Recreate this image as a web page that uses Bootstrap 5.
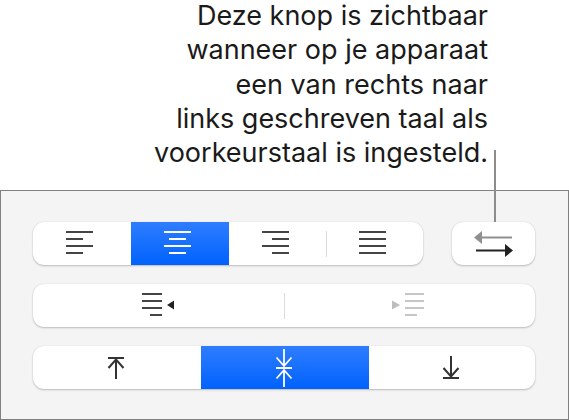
<!DOCTYPE html>
<html>
<head>
    <title>Tekstrichting</title>
    <link rel="stylesheet" href="https://cdn.jsdelivr.net/npm/bootstrap@5.3.0/dist/css/bootstrap.min.css">
    <style>
        html, body { height: 420px; overflow: hidden; background: #fff; }
        .callout-text {
            height: 190px;
            margin-top: -1px;
            margin-bottom: 1px;
            padding-right: 81px;
            font-family: Inter, "Noto Sans", sans-serif;
            font-size: 27px;
            line-height: 34.3px;
            color: #1a1a1a;
        }
        .callout-line { position: absolute; left: 494px; top: 150px; width: 2px; height: 72px; background: #8c8c8c; z-index: 2; }
        .panel-box { height: 230px; background: #f4f4f4; border: 1px solid #808080; padding: 31px 33px 0 32px; }
        .seg-row { height: 43px; }
        .seg-group { background: #fff; border-radius: 11px; box-shadow: 0 0 1px rgba(0,0,0,.18), 0 1px 2px rgba(0,0,0,.22); overflow: hidden; }
        .seg-item { flex: none; padding: 0; border: 0; border-radius: 0; background: transparent; height: 43px; width: 98px; }
        .seg-narrow { width: 97px; }
        .seg-last { width: 96px; }
        .seg-wide { width: 168px; }
        .seg-rest { width: 166px; }
        .seg-half { width: 250.5px; }
        .seg-item:hover, .seg-item:active { background: transparent; }
        .seg-item.seg-on, .seg-item.seg-on:hover { background: linear-gradient(#2f7dff, #0062fd); }
        .seg-sep { flex: none; width: 1px; height: 26px; background: #dcdcdc; }
        .seg-dir { width: 83px; }
        .row-gap { gap: 19px; }
        .icon-shift { padding: 0 5px 3px 0; }
        .icon-shift-sm { padding-right: 3px; }
        .icon-lift { padding-bottom: 4px; }
        svg { display: block; }
    </style>
</head>
<body>
<div class="callout-text text-end">
    Deze knop is zichtbaar<br>
    wanneer op je apparaat<br>
    een van rechts naar<br>
    links geschreven taal als<br>
    voorkeurstaal is ingesteld.
</div>
<div class="callout-line"></div>

<div class="panel-box d-flex flex-column row-gap">
    <div class="d-flex justify-content-between seg-row">
        <div class="seg-group d-flex align-items-center">
            <button class="btn seg-item icon-shift d-flex align-items-center justify-content-center">
                <svg width="27" height="24" viewBox="0 0 27 24" stroke="#444" stroke-width="2"><path d="M0 2h27M0 9h17M0 16h27M0 23h17"/></svg>
            </button>
            <button class="btn seg-item seg-on icon-shift d-flex align-items-center justify-content-center">
                <svg width="27" height="24" viewBox="0 0 27 24" stroke="#fff" stroke-width="2"><path d="M0 2h27M5 9h17M0 16h27M5 23h17"/></svg>
            </button>
            <button class="btn seg-item seg-narrow icon-shift d-flex align-items-center justify-content-center">
                <svg width="27" height="24" viewBox="0 0 27 24" stroke="#444" stroke-width="2"><path d="M0 2h27M10 9h17M0 16h27M10 23h17"/></svg>
            </button>
            <div class="seg-sep"></div>
            <button class="btn seg-item seg-last icon-shift d-flex align-items-center justify-content-center">
                <svg width="27" height="24" viewBox="0 0 27 24" stroke="#444" stroke-width="2"><path d="M0 2h27M0 9h27M0 16h27M0 23h27"/></svg>
            </button>
        </div>
        <div class="seg-group">
            <button class="btn seg-item seg-dir d-flex align-items-center justify-content-center">
                <svg width="39" height="28" viewBox="0 0 39 28"><path d="M7 7.500h31" stroke="#8f8f8f" stroke-width="2"/><path d="M0 7.500 8 1v13z" fill="#8f8f8f"/><path d="M2 20.500h30" stroke="#222" stroke-width="2"/><path d="M39 20.500l-8-6.500v13z" fill="#222"/></svg>
            </button>
        </div>
    </div>

    <div class="seg-group d-flex align-items-center seg-row">
        <button class="btn seg-item seg-half icon-lift d-flex align-items-center justify-content-center">
            <svg width="32" height="24" viewBox="0 0 32 24"><path d="M0 2h20M0 9h20M0 16h20M8 23h12" stroke="#444" stroke-width="2"/><path d="M25 13l7-4.500v9z" fill="#222"/></svg>
        </button>
        <div class="seg-sep"></div>
        <button class="btn seg-item seg-half icon-lift icon-shift-sm d-flex align-items-center justify-content-center">
            <svg width="32" height="24" viewBox="0 0 32 24"><path d="M13 2h19M13 9h19M13 16h19M13 23h12" stroke="#c6c6c6" stroke-width="2"/><path d="M8 13l-8-4.500v9z" fill="#bdbdbd"/></svg>
        </button>
    </div>

    <div class="seg-group d-flex align-items-center seg-row">
        <button class="btn seg-item seg-wide icon-shift-sm d-flex align-items-center justify-content-center">
            <svg width="18" height="22" viewBox="0 0 18 22" fill="none" stroke="#333" stroke-width="2"><path d="M1 1h16M9 2v20M1.500 11 9 2.500 16.500 11"/></svg>
        </button>
        <button class="btn seg-item seg-wide seg-on icon-shift-sm d-flex align-items-center justify-content-center">
            <svg width="18" height="38" viewBox="0 0 18 38" fill="none" stroke="#fff" stroke-width="1.800"><path d="M1 19h16M9 0v17M9 21v17M1.500 8.500 9 17l7.500-8.500M1.500 29.500 9 21l7.500 8.500"/></svg>
        </button>
        <button class="btn seg-item seg-rest icon-shift-sm d-flex align-items-center justify-content-center">
            <svg width="18" height="23" viewBox="0 0 18 23" fill="none" stroke="#333" stroke-width="2"><path d="M1 22h16M9 0v21M1.500 12 9 20.500 16.500 12"/></svg>
        </button>
    </div>
</div>
<script src="https://cdn.jsdelivr.net/npm/bootstrap@5.3.0/dist/js/bootstrap.bundle.min.js"></script>
</body>
</html>
